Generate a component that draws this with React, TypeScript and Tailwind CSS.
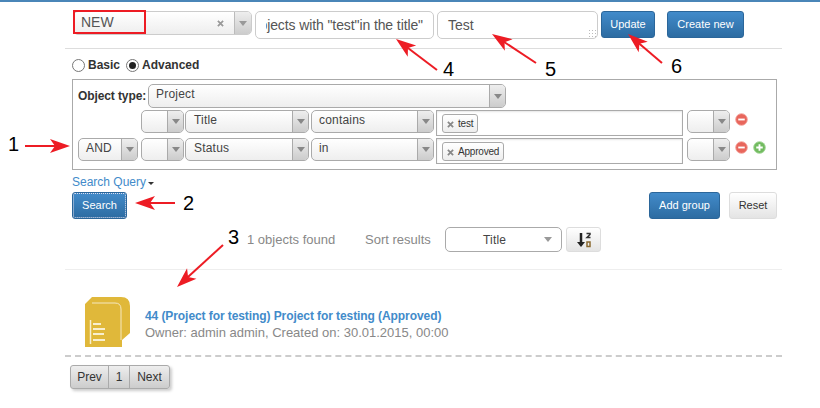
import type { ReactNode } from "react";

// down-pointing caret used by every select
function Caret({ color = "border-t-[#888]" }: { color?: string }) {
  return <span className={`block w-0 h-0 border-x-[4px] border-x-transparent border-t-[5px] ${color}`} />;
}

function Select({ className, label, h = "h-[23px]", pad = "pl-[7px]" }: { className: string; label?: string; h?: string; pad?: string }) {
  return (
    <div className={`flex flex-none rounded-[5px] border border-[#aaa] bg-gradient-to-b from-white to-[#eee] overflow-hidden ${h} ${className}`}>
      <span className={`flex-1 text-[12px] tracking-[0.2px] leading-[19px] text-[#444] truncate ${pad}`}>{label}</span>
      <span className="flex-none flex items-center justify-center w-[16px] border-l border-[#aaa] bg-gradient-to-b from-[#eee] to-[#ccc]">
        <Caret />
      </span>
    </div>
  );
}

function Tag({ label }: { label: string }) {
  return (
    <span className="inline-flex items-center h-[19px] mt-[2px] ml-[5px] pl-[4px] pr-[4px] gap-[4px] rounded-[3px] border border-[#aaa] bg-gradient-to-b from-white to-[#eee] text-[10px] tracking-[-0.2px] text-[#333]">
      <XMark className="w-[7px] h-[7px] mt-[2px] text-[#888]" />
      {label}
    </span>
  );
}

function XMark({ className }: { className: string }) {
  return (
    <svg viewBox="0 0 8 8" className={className}>
      <path d="M1 1l6 6M7 1L1 7" stroke="currentColor" strokeWidth="2" />
    </svg>
  );
}

function RoundIcon({ plus, className }: { plus?: boolean; className?: string }) {
  return (
    <svg viewBox="0 0 14 14" className={`w-[13px] h-[13px] flex-none ${className ?? ""}`}>
      <circle cx="7" cy="7" r="6.3" fill={plus ? "#72bb60" : "#e8665c"} stroke={plus ? "#a5d799" : "#f4aaa3"} />
      <path d={plus ? "M3.5 7h7M7 3.5v7" : "M3.5 7h7"} stroke="white" strokeWidth="2" />
    </svg>
  );
}

function BlueButton({ className, children }: { className: string; children: ReactNode }) {
  return (
    <button className={`flex-none rounded-[3px] border border-[#2b669a] bg-gradient-to-b from-[#428bca] to-[#2d6ca2] text-white text-[11px] ${className}`}>
      {children}
    </button>
  );
}

function Radio({ checked }: { checked?: boolean }) {
  return (
    <span className="flex-none flex items-center justify-center w-[13px] h-[13px] rounded-full border border-[#777] bg-white">
      {checked && <span className="w-[7px] h-[7px] rounded-full bg-[#222]" />}
    </span>
  );
}

// red annotation arrow drawn from tail to tip
function Arrow({ x1, y1, x2, y2 }: { x1: number; y1: number; x2: number; y2: number }) {
  const len = Math.hypot(x2 - x1, y2 - y1);
  const ux = (x2 - x1) / len;
  const uy = (y2 - y1) / len;
  const at = (back: number, side: number) => `${x2 - ux * back - uy * side},${y2 - uy * back + ux * side}`;
  return (
    <g>
      <line x1={x1} y1={y1} x2={x2 - ux * 10} y2={y2 - uy * 10} stroke="#ed1c24" strokeWidth="2" />
      <polygon points={`${x2},${y2} ${at(20, 7)} ${at(15, 0)} ${at(20, -7)}`} fill="#ed1c24" />
    </g>
  );
}

function Note({ className, children }: { className: string; children: ReactNode }) {
  return <span className={`absolute text-[20px] leading-[20px] text-black ${className}`}>{children}</span>;
}

export default function App() {
  return (
    <div className="relative w-[820px] h-[408px] overflow-hidden bg-white font-['Liberation_Sans',Arial,sans-serif]">
      <div className="h-[2px] bg-[#4a86b8]" />

      <div className="w-[717px] ml-[65px]">
        {/* Saved search row */}
        <div className="flex pt-[9px] pl-[8px] h-[45px]">
          <div className="flex flex-none w-[179px] h-[24px] rounded-[5px] border border-[#ccc] bg-gradient-to-b from-white to-[#eee] overflow-hidden">
            <span className="flex-1 pl-[7px] text-[14px] leading-[20px] text-[#555]">NEW</span>
            <XMark className="w-[7px] h-[7px] mt-[8px] mr-[10px] text-[#999]" />
            <span className="flex-none flex items-center justify-center w-[17px] border-l border-[#bbb] bg-gradient-to-b from-[#eee] to-[#ccc]">
              <Caret color="border-t-[#999]" />
            </span>
          </div>
          <div className="flex-none w-[179px] h-[28px] ml-[3px] rounded-[5px] border border-[#ccc] text-[14px] tracking-[-0.1px] leading-[26px] text-[#555] pl-[10px]">
            <div className="flex justify-end w-[157px] overflow-hidden whitespace-nowrap">
              <span className="flex-none">Objects with "test"in the title"</span>
            </div>
          </div>
          <div className="relative flex-none w-[161px] h-[28px] ml-[3px] rounded-[5px] border border-[#ccc] pl-[10px] text-[14px] leading-[26px] text-[#555]">
            Test
            <span className="absolute right-[1px] bottom-[1px] w-[8px] h-[8px] bg-[radial-gradient(#bbb_1px,transparent_1px)] bg-[length:3px_3px]" />
          </div>
          <BlueButton className="w-[54px] h-[27px] ml-[3px] from-[#3a7cb5] to-[#2a6399]">Update</BlueButton>
          <BlueButton className="w-[77px] h-[27px] ml-[12px]">Create new</BlueButton>
        </div>

        <div className="h-px mt-[1px] bg-[#ddd]" />

        {/* Mode switch */}
        <div className="flex items-center h-[16px] mt-[8px] ml-[7px] text-[12px] font-bold text-[#333]">
          <Radio />
          <span className="ml-[3px] w-[38px]">Basic</span>
          <Radio checked />
          <span className="ml-[3px]">Advanced</span>
        </div>

        {/* Query builder */}
        <div className="w-[705px] h-[91px] mt-[6px] ml-[7px] border border-[#aaa] pl-[5px] pt-[4px]">
          <div className="flex items-center">
            <span className="w-[70px] text-[12px] font-bold tracking-[-0.1px] text-[#333]">Object type:</span>
            <Select className="w-[358px]" h="h-[24px]" label="Project" />
          </div>
          <div className="flex items-start h-[28px] mt-[2px] pl-[63px] gap-[1px]">
            <Select className="w-[43px]" />
            <Select className="w-[124px]" pad="pl-[8px]" label="Title" />
            <Select className="w-[123px] ml-[1px]" label="contains" />
            <div className="flex-none w-[247px] h-[26px] ml-[1px] border border-[#aaa] bg-white shadow-[inset_0_1px_2px_rgba(0,0,0,0.1)]"><Tag label="test" /></div>
            <Select className="w-[43px] ml-[3px]" />
            <RoundIcon className="ml-[4px] mt-[3px]" />
          </div>
          <div className="flex items-start h-[28px] gap-[1px]">
            <Select className="w-[60px]" label="AND" />
            <Select className="w-[43px] ml-[2px]" />
            <Select className="w-[124px]" pad="pl-[8px]" label="Status" />
            <Select className="w-[123px] ml-[1px]" label="in" />
            <div className="flex-none w-[247px] h-[26px] ml-[1px] border border-[#aaa] bg-white shadow-[inset_0_1px_2px_rgba(0,0,0,0.1)]"><Tag label="Approved" /></div>
            <Select className="w-[43px] ml-[3px]" />
            <RoundIcon className="ml-[4px] mt-[3px]" />
            <RoundIcon plus className="ml-[4px] mt-[3px]" />
          </div>
        </div>

        {/* Actions */}
        <div className="flex items-center h-[14px] mt-[5px] ml-[7px] text-[12px] text-[#428bca]">
          Search Query
          <span className="ml-[2px] mt-[2px] w-0 h-0 border-x-[3px] border-x-transparent border-t-[3px] border-t-[#333]" />
        </div>
        <div className="flex items-start h-[27px] mt-[3px] ml-[7px]">
          <BlueButton className="w-[55px] h-[27px] outline-1 outline-dotted -outline-offset-2 outline-[#dde]">Search</BlueButton>
          <BlueButton className="w-[71px] h-[27px] ml-[522px]">Add group</BlueButton>
          <button className="flex-none w-[48px] h-[27px] ml-[9px] rounded-[3px] border border-[#ddd] bg-gradient-to-b from-white to-[#e4e4e4] text-[11px] text-[#333]">Reset</button>
        </div>

        {/* Result summary */}
        <div className="flex items-center h-[25px] mt-[8px] pl-[182px] text-[13px] text-[#888]">
          <span className="w-[118px]">1 objects found</span>
          <span className="w-[80px]">Sort results</span>
          <div className="flex-none flex items-center w-[117px] h-[25px] rounded-[5px] border border-[#aaa] bg-white pl-[37px] pr-[9px] text-[12px] tracking-[0.2px] text-[#444]">
            <span className="flex-1">Title</span>
            <Caret color="border-t-[#999]" />
          </div>
          <button className="flex-none flex items-center justify-center w-[35px] h-[25px] ml-[4px] rounded-[3px] border border-[#ddd] bg-gradient-to-b from-white to-[#e4e4e4]">
            <svg viewBox="0 0 16 16" className="w-[16px] h-[16px]">
              <path d="M5 1v10" stroke="#222" strokeWidth="2.5" />
              <path d="M1 10h8L5 15z" fill="#222" />
              <path d="M10.5 1.5h3.5v1L11 5.5h3.5" fill="none" stroke="#333" strokeWidth="1.5" />
              <rect x="11" y="10" width="3" height="4.5" fill="none" stroke="#8a6a30" strokeWidth="1.5" />
            </svg>
          </button>
        </div>

        <div className="h-px mt-[17px] bg-[#eee]" />

        {/* Result */}
        <div className="flex h-[87px] border-b-2 border-dashed border-[#ccc]">
          <svg viewBox="0 0 45 50" className="flex-none w-[45px] h-[50px] mt-[27px] ml-[20px]">
            <path d="M0 50V7L7 0H36Q45 0 45 9V36L37 43V50Z" fill="#e0b83a" />
            <path d="M7 6H30Q36 6 36 12V43" fill="none" stroke="#f5e8bf" strokeWidth="1" />
            <path d="M5.5 23V47" stroke="#f8efcf" strokeWidth="1.5" />
            <path d="M8 27h8M8 32h12M8 37h11M8 43h12" stroke="#f8efcf" strokeWidth="2" />
          </svg>
          <div className="mt-[38px] ml-[15px] text-[12px] leading-[17px]">
            <div className="font-bold tracking-[-0.08px] text-[#428bca]">44 (Project for testing) Project for testing (Approved)</div>
            <div className="-mt-[1px] text-[13px] text-[#888]">Owner: admin admin, Created on: 30.01.2015, 00:00</div>
          </div>
        </div>

        {/* Pager */}
        <div className="flex w-[100px] h-[24px] mt-[8px] ml-[5px] rounded-[3px] border border-[#aaa] bg-gradient-to-b from-[#eee] to-[#ccc] shadow-[2px_2px_3px_rgba(0,0,0,0.2)] text-[12px] leading-[22px] text-[#333]">
          <span className="w-[38px] text-center border-r border-[#aaa]">Prev</span>
          <span className="w-[21px] text-center border-r border-[#aaa]">1</span>
          <span className="flex-1 text-center">Next</span>
        </div>
      </div>

      {/* Annotations lying over the screenshot */}
      <span className="absolute left-[73px] top-[10px] w-[73px] h-[24px] border-2 border-[#ed1c24]" />
      <svg viewBox="0 0 820 408" className="absolute inset-0 w-[820px] h-[408px] pointer-events-none">
        <Arrow x1={25} y1={146} x2={70} y2={146} />
        <Arrow x1={175} y1={203} x2={135} y2={203} />
        <Arrow x1={223} y1={245} x2={177} y2={287} />
        <Arrow x1={437} y1={70} x2={396} y2={39} />
        <Arrow x1={536} y1={63} x2={492} y2={34} />
        <Arrow x1={662} y1={63} x2={628} y2={34} />
      </svg>
      <Note className="left-[8px] top-[134px]">1</Note>
      <Note className="left-[183px] top-[193px]">2</Note>
      <Note className="left-[228px] top-[227px]">3</Note>
      <Note className="left-[443px] top-[59px]">4</Note>
      <Note className="left-[545px] top-[59px]">5</Note>
      <Note className="left-[671px] top-[56px]">6</Note>
    </div>
  );
}
